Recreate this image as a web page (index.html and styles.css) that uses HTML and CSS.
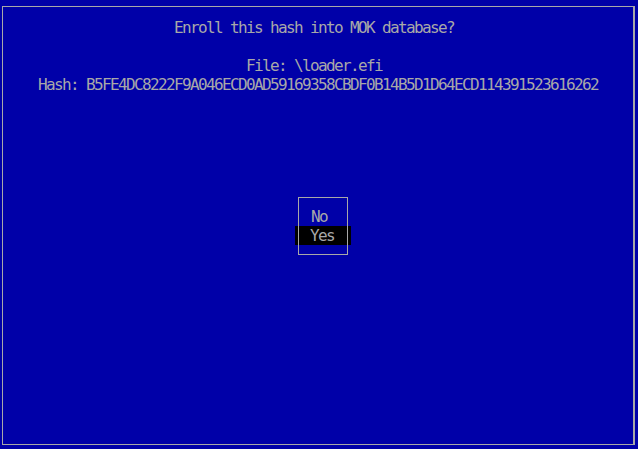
FILE: index.html
```html
<!DOCTYPE html>
<html>
<head>
<meta charset="utf-8">
<link rel="stylesheet" href="styles.css">
</head>
<body>
<div class="frame">
  <div class="line title">Enroll this hash into MOK database? </div>
  <div class="line blank"> </div>
  <div class="line">File: \loader.efi </div>
  <div class="line">Hash: B5FE4DC8222F9A046ECD0AD59169358CBDF0B14B5D1D64ECD114391523616262</div>
  <div class="menu">
    <div class="item">No</div>
    <div class="item selected">Yes</div>
  </div>
</div>
</body>
</html>
```
FILE: styles.css
```css
html, body {
  margin: 0;
  padding: 0;
  background: #0000a8;
  height: 449px;
  overflow: hidden;
}

body {
  font-family: "DejaVu Sans Mono", "Liberation Mono", monospace;
  font-size: 16px;
  letter-spacing: -1.63px;
  color: #a8a8a8;
}

.frame {
  box-sizing: border-box;
  margin: 6px 3px 0 2px;
  width: 633px;
  height: 439px;
  border-style: solid;
  border-color: #a8a8a8;
  border-width: 1px 2px 1px 1px;
  padding-top: 11px;
  display: flex;
  flex-direction: column;
  align-items: center;
}

.line {
  white-space: pre;
  line-height: 19px;
  height: 19px;
  text-align: center;
}

.menu {
  position: relative;
  align-self: flex-start;
  margin-top: 103px;
  margin-left: 295px;
  box-sizing: border-box;
  width: 50px;
  padding: 10px 0 10px 0;
}

.menu::after {
  content: "";
  position: absolute;
  inset: 0;
  border: 1px solid #a8a8a8;
  pointer-events: none;
}

.item {
  white-space: pre;
  line-height: 19px;
  height: 19px;
  padding-left: 13px;
}

.item.selected {
  background: #000000;
  margin: 0 -3px 0 -3px;
  padding-left: 15px;
}
```
